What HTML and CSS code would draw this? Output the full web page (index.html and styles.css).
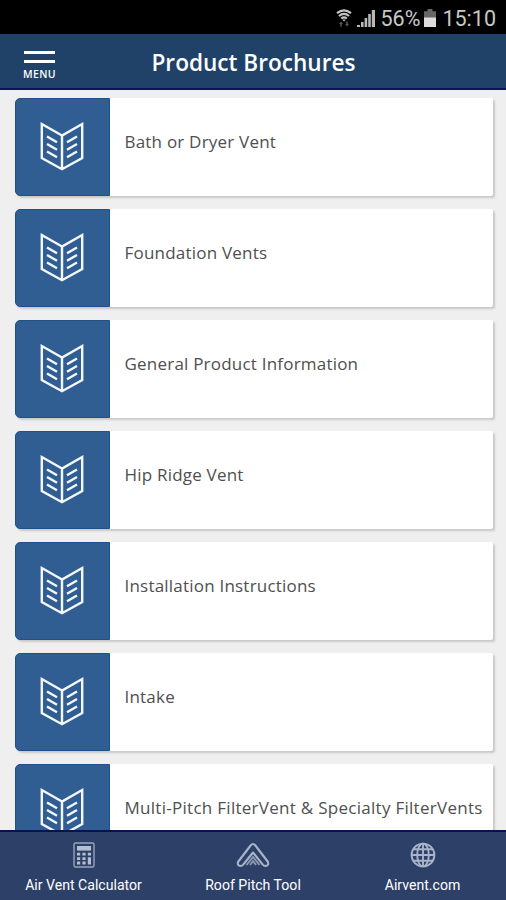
FILE: index.html
```
<!DOCTYPE html>
<html lang="en">

<head>
    <meta charset="UTF-8">
    <meta name="viewport" content="width=device-width,initial-scale=1">
    <title>Product Brochures</title>
    <link rel="stylesheet" href="styles.css">
</head>

<body>
    <svg class="defs">
        <symbol id="book" viewBox="0 0 44 50">
            <path d="M22 14.5 L1.8 3 V37 L22 48.2 L42.2 37 V3 Z M22 14.5 V48" stroke-width="2.4" />
            <path d="M7 15.5 l10 5.8 M7 23 l10 5.8 M7 30.5 l10 5.8 M37 15.5 l-10 5.8 M37 23 l-10 5.8 M37 30.5 l-10 5.8" stroke-width="2.4" />
        </symbol>
    </svg>
    <div class="status">
        <svg class="wifi" viewBox="0 0 16 18">
            <path d="M1 4.2 Q8 -1.5 15 4.2 M3 7 Q8 2.8 13 7 M5.2 9.5 Q8 7.2 10.8 9.5" fill="none" stroke="#c4c4c4" stroke-width="2.2" />
            <path d="M6.2 10.5 h3.6 L8 12.5z" fill="#c4c4c4" />
            <path d="M5 12.5 l2 2.5 h-1.2 v2.5 h-1.6 v-2.5 h-1.2z M11 17.5 l-2 -2.5 h1.2 v-2.5 h1.6 v2.5 h1.2z" fill="#555" />
        </svg>
        <svg class="signal" viewBox="0 0 18 18">
            <path d="M0 18 v-2 h3 v2z M4 18 v-5 h2.6 v5z M7.6 18 v-9 h2.6 v9z M11.2 18 V5 h2.6 v13z M14.8 18 V1 H18 v17z" fill="#b8b8b8" />
        </svg>
        <span class="percent">56%</span>
        <svg class="battery" viewBox="0 0 12 18">
            <path d="M3.5 0 h5 v2.2 H12 V9 H0 V2.2 h3.5z" fill="#666" />
            <path d="M0 8.5 h12 V18 H0z" fill="#ddd" />
        </svg>
        <span class="clock">15:10</span>
    </div>
    <header class="header">
        <div class="menu">
            <i></i>
            <i></i>
            <span>MENU</span>
        </div>
        <h1>Product Brochures</h1>
    </header>
    <main class="list">
        <div class="card">
            <div class="thumb"><svg><use href="#book" /></svg></div>
            <span>Bath or Dryer Vent</span>
        </div>
        <div class="card">
            <div class="thumb"><svg><use href="#book" /></svg></div>
            <span>Foundation Vents</span>
        </div>
        <div class="card">
            <div class="thumb"><svg><use href="#book" /></svg></div>
            <span>General Product Information</span>
        </div>
        <div class="card">
            <div class="thumb"><svg><use href="#book" /></svg></div>
            <span>Hip Ridge Vent</span>
        </div>
        <div class="card">
            <div class="thumb"><svg><use href="#book" /></svg></div>
            <span>Installation Instructions</span>
        </div>
        <div class="card">
            <div class="thumb"><svg><use href="#book" /></svg></div>
            <span>Intake</span>
        </div>
        <div class="card">
            <div class="thumb"><svg><use href="#book" /></svg></div>
            <span class="long">Multi-Pitch FilterVent &amp; Specialty FilterVents</span>
        </div>
    </main>
    <footer class="tabs">
        <div class="tab">
            <svg width="22" height="26" viewBox="0 0 22 26">
                <rect x="1" y="1" width="20" height="24" rx="1.5" fill="none" stroke="#98a4bd" stroke-width="1.4" />
                <path d="M4 4 h14 v4.6 H4z" fill="#b4bfd3" />
                <path d="M4 10.8 h3.2 v2.8 H4z M9.4 10.8 h3.2 v2.8 H9.4z M14.8 10.8 H18 v2.8 h-3.2z M4 15.2 h3.2 V18 H4z M9.4 15.2 h3.2 V18 H9.4z M4 19.6 h3.2 v2.8 H4z M9.4 19.6 h3.2 v2.8 H9.4z M14.8 15.2 H18 v7.2 h-3.2z" fill="#b4bfd3" />
            </svg>
            <span>Air Vent Calculator</span>
        </div>
        <div class="tab">
            <svg width="34" height="26" viewBox="0 0 34 26">
                <path d="M14.6 3.5 Q17 0.5 19.4 3.5 L32 20 Q33 23.5 29.5 24 Q28 24 26.8 22.6 L17 10.5 L7.2 22.6 Q6 24 4.5 24 Q1 23.5 2 20 Z" fill="none" stroke="#a9b4ca" stroke-width="2.1" stroke-linejoin="round" />
                <path d="M10.5 23 L17 15 L23.5 23 M14 23 L17 19 L20 23" fill="none" stroke="#8e9ab5" stroke-width="1.9" />
            </svg>
            <span>Roof Pitch Tool</span>
        </div>
        <div class="tab">
            <svg width="26" height="26" viewBox="0 0 26 26">
                <g fill="none" stroke="#a9b4ca" stroke-width="1.9">
                    <circle cx="13" cy="13" r="11.4" />
                    <ellipse cx="13" cy="13" rx="5.8" ry="11.4" />
                    <path d="M13 1.4 V24.6 M1.4 13 H24.6 M3 7.2 H23 M3 18.8 H23" />
                </g>
            </svg>
            <span>Airvent.com</span>
        </div>
    </footer>
</body>

</html>
```

FILE: styles.css
```
* {
    margin: 0;
    padding: 0;
    box-sizing: border-box;
}

body {
    height: 900px;
    display: flex;
    flex-direction: column;
    overflow: hidden;
    background-color: #efeff0;
    font-family: "Open Sans", "Noto Sans", sans-serif;
}

.defs {
    display: none;
}

.status {
    flex: none;
    height: 34px;
    padding: 2px 10px 0 0;
    display: flex;
    justify-content: flex-end;
    align-items: center;
    background-color: #000;
    color: #c8c8c8;
    font-family: Roboto, sans-serif;
    font-size: 21.5px;
}

.wifi {
    width: 16px;
    height: 18px;
    margin-right: 5px;
}

.signal {
    width: 18px;
    height: 18px;
    margin-right: 6px;
}

.battery {
    width: 12px;
    height: 18px;
    margin: 0 6px 0 4px;
}

.header {
    flex: none;
    height: 56px;
    display: flex;
    background-color: #204268;
    border-bottom: 2px solid #0b1659;
    color: #fff;
}

.menu {
    width: 79px;
    padding-top: 17px;
    display: flex;
    flex-direction: column;
    align-items: center;
}

.menu i {
    width: 31px;
    height: 3px;
    margin-bottom: 6px;
    background-color: #fff;
}

.menu span {
    font-size: 10.5px;
    font-weight: 600;
    line-height: 10px;
    letter-spacing: .3px;
}

.header h1 {
    flex: 1;
    padding-right: 78px;
    text-align: center;
    font-size: 22.6px;
    font-weight: 600;
    line-height: 58px;
    white-space: nowrap;
}

.list {
    flex: 1;
    min-height: 0;
    overflow: hidden;
    padding: 7.5px 12px 0 15px;
    display: flex;
    flex-direction: column;
    gap: 13px;
}

.card {
    flex: none;
    height: 98px;
    margin-right: 1px;
    display: flex;
    background-color: #fff;
    border-radius: 5px 2px 2px 5px;
    box-shadow: 2px 2px 2px #c9c9ca;
    color: #4f4f4f;
    font-size: 17px;
    line-height: 24px;
    letter-spacing: .21px;
    white-space: nowrap;
}

.card span {
    padding: 32.5px 0 0 14.5px;
}

.card .long {
    letter-spacing: .28px;
}

.thumb {
    width: 95px;
    padding: 22.5px 0 0 24px;
    background-color: #315e92;
    border: 1px solid #20508a;
    border-radius: 5px 0 0 5px;
}

.thumb svg {
    display: block;
    width: 44px;
    height: 50px;
    fill: none;
    stroke: #f4f8fc;
}

.tabs {
    flex: none;
    height: 70px;
    padding-top: 10px;
    display: grid;
    grid-template-columns: 167px 1fr 167px;
    background-color: #2d4067;
    border-top: 2px solid #0b1050;
    color: #fff;
    font-family: Roboto, sans-serif;
    font-size: 14.1px;
}

.tab {
    display: flex;
    flex-direction: column;
    align-items: center;
    gap: 9px;
}

.tab span {
    line-height: 16px;
}
```
